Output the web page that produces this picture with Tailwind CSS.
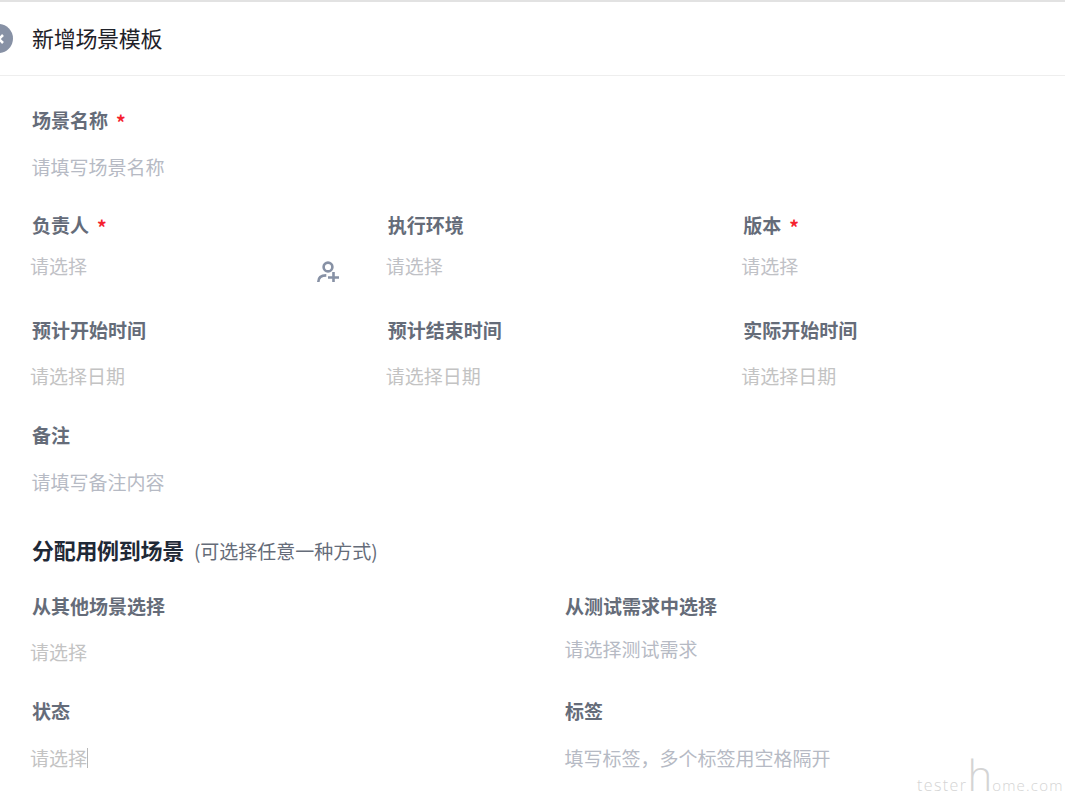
<!DOCTYPE html>
<html lang="zh">
<head>
<meta charset="utf-8">
<script src="https://cdn.jsdelivr.net/npm/@tailwindcss/browser@4"></script>
</head>
<body class="bg-white font-['Noto_Sans_CJK_SC',sans-serif] overflow-hidden">
<div class="relative w-[1065px] h-[808px] overflow-hidden border-t-2 border-[#e2e2e2]">
  <header class="relative h-[74px] flex items-center pl-[32px] pb-[2px] border-b border-[#eeeeee] text-[22px] tracking-[-0.3px] text-[#1f2229]">
    <div class="absolute left-[-16px] top-[22px] w-[29px] h-[29px] rounded-full bg-[#8791a5] flex items-center justify-center">
      <svg width="10" height="10" viewBox="0 0 10 10" fill="none" stroke="#fff" stroke-width="2.6"><path d="M1 1l8 8M9 1l-8 8"/></svg>
    </div>
    新增场景模板
  </header>
  <main class="px-[32px] pt-[30px] text-[19px] leading-[28px]">
    <section class="h-[105px] flex flex-col">
      <label class="h-[28px] font-bold text-[#656c79] flex">场景名称<span class="ml-[8px] mt-[2px] text-[#f5222d] font-bold">*</span></label>
      <div class="mt-[19px] -ml-[0.5px] text-[#b6bac4]">请填写场景名称</div>
    </section>
    <section class="grid grid-cols-3 w-[1067px]">
      <div class="relative h-[105px]">
        <label class="h-[28px] font-bold text-[#656c79] flex">负责人<span class="ml-[8px] mt-[2px] text-[#f5222d] font-bold">*</span></label>
        <div class="mt-[13px] -ml-[2px] text-[#bfc1c6]">请选择</div>
        <svg class="absolute left-[285px] top-[50px]" width="22" height="21" viewBox="0 0 22 21" fill="none" stroke="#8791a5" stroke-width="2.6"><circle cx="11" cy="6" r="4.4"/><path d="M1.3 21c0-4.5 3.2-6.6 8-6.6"/><path d="M11 16.5h11M16.5 11v10"/></svg>
      </div>
      <div class="h-[105px]">
        <label class="h-[28px] font-bold text-[#656c79] flex">执行环境</label>
        <div class="mt-[13px] -ml-[2px] text-[#bfc1c6]">请选择</div>
      </div>
      <div class="h-[105px]">
        <label class="h-[28px] font-bold text-[#656c79] flex">版本<span class="ml-[8px] mt-[2px] text-[#f5222d] font-bold">*</span></label>
        <div class="mt-[13px] -ml-[2px] text-[#bfc1c6]">请选择</div>
      </div>
      <div class="h-[105px]">
        <label class="h-[28px] font-bold text-[#656c79] flex">预计开始时间</label>
        <div class="mt-[18px] -ml-[2px] text-[#c3c3c3]">请选择日期</div>
      </div>
      <div class="h-[105px]">
        <label class="h-[28px] font-bold text-[#656c79] flex">预计结束时间</label>
        <div class="mt-[18px] -ml-[2px] text-[#c3c3c3]">请选择日期</div>
      </div>
      <div class="h-[105px]">
        <label class="h-[28px] font-bold text-[#656c79] flex">实际开始时间</label>
        <div class="mt-[18px] -ml-[2px] text-[#c3c3c3]">请选择日期</div>
      </div>
    </section>
    <section class="h-[114px]">
      <label class="h-[28px] font-bold text-[#656c79] flex">备注</label>
      <div class="mt-[19px] -ml-[0.5px] text-[#b6bac4]">请填写备注内容</div>
    </section>
    <h2 class="h-[57px] flex items-baseline text-[#1f2937]">
      <span class="text-[22px] font-bold tracking-[-0.3px]">分配用例到场景</span>
      <span class="ml-[10px] text-[#656c79]">(可选择任意一种方式)</span>
    </h2>
    <section class="grid grid-cols-2 w-[1066px]">
      <div class="h-[105px]">
        <label class="h-[28px] font-bold text-[#656c79] flex">从其他场景选择</label>
        <div class="mt-[18px] -ml-[2px] text-[#c3c3c3]">请选择</div>
      </div>
      <div class="h-[105px]">
        <label class="h-[28px] font-bold text-[#656c79] flex">从测试需求中选择</label>
        <div class="mt-[15px] -ml-[0.5px] text-[#b6bac4]">请选择测试需求</div>
      </div>
      <div class="h-[105px]">
        <label class="h-[28px] font-bold text-[#656c79] flex">状态</label>
        <div class="mt-[19px] -ml-[2px] text-[#c3c3c3] flex items-center">请选择<span class="w-px h-[20px] bg-[#b8b8b8]"></span></div>
      </div>
      <div class="h-[105px]">
        <label class="h-[28px] font-bold text-[#656c79] flex">标签</label>
        <div class="mt-[19px] -ml-[0.5px] text-[#b6bac4]">填写标签，多个标签用空格隔开</div>
      </div>
    </section>
  </main>
  <div class="absolute left-[917px] top-[753px] flex items-baseline font-['Open_Sans',sans-serif] font-light text-[#d4d4d4] text-[16px] leading-[40px] tracking-[1.4px] whitespace-nowrap">tester<span class="text-[42px] leading-[40px] tracking-[0px]">h</span><span class="text-[15px] tracking-[1.2px]">ome.com</span></div>
</div>
</body>
</html>
